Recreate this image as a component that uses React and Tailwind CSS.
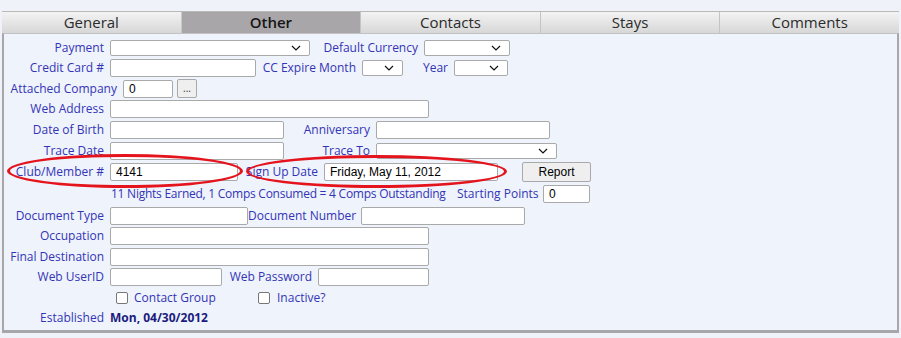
import React from "react";

const font = { fontFamily: '"Open Sans", "Noto Sans", sans-serif' };

const Label = ({ w, children, className = "" }) => (
  <div className={`shrink-0 text-right text-[12px] text-[#3434b6] pr-[6px] whitespace-nowrap ${className}`} style={{ width: w }}>
    {children}
  </div>
);

const Input = ({ w, value = "" }) => (
  <div
    className="shrink-0 h-[18px] bg-white border border-[#a9a9a9] rounded-[2px] px-[5px] flex items-center text-[12px] text-black"
    style={{ width: w, fontFamily: '"Liberation Sans", Arial, sans-serif' }}
  >
    {value}
  </div>
);

const Select = ({ w }) => (
  <div
    className="shrink-0 h-[16px] bg-white border border-[#a9a9a9] rounded-[2px] flex items-center justify-end pr-[8px]"
    style={{ width: w }}
  >
    <svg width="10" height="6" viewBox="0 0 10 6">
      <path d="M1 1 L5 5 L9 1" fill="none" stroke="#111" strokeWidth="1.2" />
    </svg>
  </div>
);

const Row = ({ h, children }) => (
  <div className="flex items-center" style={{ height: h }}>
    {children}
  </div>
);

const Checkbox = () => (
  <div className="w-[12px] h-[12px] bg-white border border-[#777] rounded-[2px] shrink-0" />
);

const tabs = ["General", "Other", "Contacts", "Stays", "Comments"];

export default function App() {
  return (
    <div className="w-[901px] h-[338px] bg-[#eff3f9] pt-[11px] px-[2px] relative overflow-hidden" style={font}>
      <div className="flex h-[22px] border-t border-[#b9b9b9]">
        {tabs.map((t) =>
          t === "Other" ? (
            <div key={t} className="flex-1 flex items-center justify-center bg-[#a9a6a9] text-[15px] font-semibold text-[#151515] border-l border-[#c9c9c9]">
              {t}
            </div>
          ) : (
            <div key={t} className="flex-1 flex items-center justify-center bg-gradient-to-b from-[#f3f3f3] to-[#d7d7d7] text-[15px] text-[#2b2b2b] border-l border-[#c4c4c4] first:border-l-0">
              {t}
            </div>
          )
        )}
      </div>
      <div className="h-[300px] bg-[#eef3fc] border-x-2 border-b-[3px] border-t border-[#a8a6ab] border-t-[#c2c2c6] pt-[3px]">
        <Row h={21}>
          <Label w={106}>Payment</Label>
          <Select w={200} />
          <Label w={114}>Default Currency</Label>
          <Select w={86} />
        </Row>
        <Row h={20}>
          <Label w={106}>Credit Card #</Label>
          <Input w={146} />
          <Label w={106}>CC Expire Month</Label>
          <Select w={41} />
          <Label w={51}>Year</Label>
          <Select w={54} />
        </Row>
        <Row h={21}>
          <Label w={119}>Attached Company</Label>
          <Input w={50} value="0" />
          <div className="ml-[4px] w-[20px] h-[19px] bg-[#efefef] border border-[#a9a9a9] rounded-[2px] flex items-center justify-center text-[10px] text-[#333] leading-none pb-[2px]">
            ...
          </div>
        </Row>
        <Row h={20}>
          <Label w={106}>Web Address</Label>
          <Input w={319} />
        </Row>
        <Row h={21}>
          <Label w={106}>Date of Birth</Label>
          <Input w={174} />
          <Label w={92}>Anniversary</Label>
          <Input w={174} />
        </Row>
        <Row h={21}>
          <Label w={106}>Trace Date</Label>
          <Input w={174} />
          <Label w={92}>Trace To</Label>
          <Select w={181} />
        </Row>
        <Row h={21}>
          <Label w={106}>Club/Member #</Label>
          <Input w={128} value="4141" />
          <Label w={86}>Sign Up Date</Label>
          <Input w={174} value="Friday, May 11, 2012" />
          <div
            className="ml-[24px] w-[69px] h-[20px] bg-[#efefef] border border-[#a9a9a9] rounded-[2px] flex items-center justify-center text-[12px] text-black"
            style={{ fontFamily: '"Liberation Sans", Arial, sans-serif' }}
          >
            Report
          </div>
        </Row>
        <Row h={24}>
          <div className="ml-[107px] shrink-0 text-[12px] tracking-[-0.25px] text-[#3434b6] whitespace-nowrap w-[346px]">
            11 Nights Earned, 1 Comps Consumed = 4 Comps Outstanding
          </div>
          <Label w={86}>Starting Points</Label>
          <Input w={47} value="0" />
        </Row>
        <Row h={19}>
          <Label w={106}>Document Type</Label>
          <Input w={138} />
          <Label w={113}>Document Number</Label>
          <Input w={164} />
        </Row>
        <Row h={21}>
          <Label w={106}>Occupation</Label>
          <Input w={319} />
        </Row>
        <Row h={21}>
          <Label w={106}>Final Destination</Label>
          <Input w={319} />
        </Row>
        <Row h={20}>
          <Label w={106}>Web UserID</Label>
          <Input w={112} />
          <Label w={96}>Web Password</Label>
          <Input w={111} />
        </Row>
        <Row h={21}>
          <div className="ml-[112px] flex items-center">
            <Checkbox />
            <span className="ml-[6px] text-[12px] text-[#3434b6] w-[124px]">Contact Group</span>
            <Checkbox />
            <span className="ml-[7px] text-[12px] text-[#3434b6]">Inactive?</span>
          </div>
        </Row>
        <Row h={20}>
          <Label w={106}>Established</Label>
          <span className="text-[12px] font-bold text-[#1c1c7e]">Mon, 04/30/2012</span>
        </Row>
      </div>

      <div className="absolute left-[7px] top-[154px] w-[236px] h-[34px] border-[3px] border-[#e5131b] rounded-[50%] pointer-events-none" />
      <div className="absolute left-[246px] top-[155px] w-[261px] h-[33px] border-[3px] border-[#e5131b] rounded-[50%] pointer-events-none" />
    </div>
  );
}
